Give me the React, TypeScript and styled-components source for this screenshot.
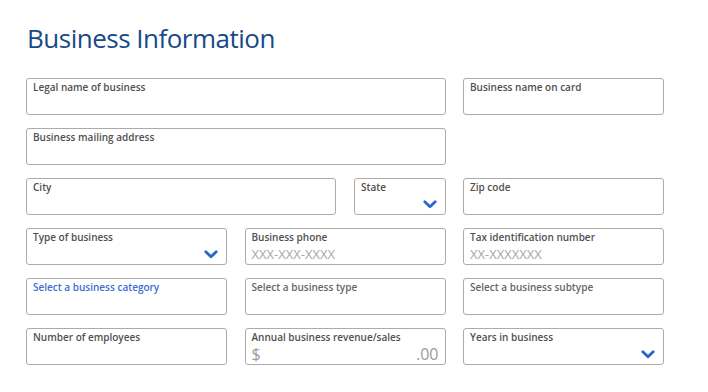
import React from "react";
import styled, { createGlobalStyle } from "styled-components";

const Global = createGlobalStyle`
  html, body { margin: 0; padding: 0; background: #fff; }
  body { font-family: "Open Sans", "Liberation Sans", sans-serif; }
`;

const Page = styled.div`
  width: 708px;
  height: 392px;
  padding: 20px 0 0 26px;
  box-sizing: border-box;
`;

const Title = styled.h1`
  margin: 0 0 22px 1px;
  font-size: 26px;
  font-weight: 400;
  line-height: 36px;
  color: #174a87;
  letter-spacing: -0.5px;
`;

const Form = styled.div`
  width: 638px;
  display: grid;
  grid-template-columns: repeat(3, 1fr);
  column-gap: 17.5px;
  row-gap: 13px;
`;

const Pair = styled.div`
  grid-column: span 2;
  display: grid;
  grid-template-columns: 310px 1fr;
  column-gap: 18px;
`;

const Field = styled.div<{ $span?: number }>`
  grid-column: span ${(p) => p.$span ?? 1};
  position: relative;
  height: 37px;
  box-sizing: border-box;
  border: 1px solid #ababab;
  border-radius: 3px;
  padding: 1px 6px 0 6px;
  display: flex;
  flex-direction: column;
  background: #fff;
`;

const Label = styled.div<{ $active?: boolean; $muted?: boolean }>`
  font-size: 10px;
  line-height: 14px;
  font-weight: 600;
  color: ${(p) => (p.$active ? "#3b6fd4" : p.$muted ? "#666" : "#505050")};
  white-space: nowrap;
`;

const Placeholder = styled.div`
  font-size: 13px;
  line-height: 16px;
  color: #a8a8a8;
  margin-top: 2px;
`;

const MoneyRow = styled.div`
  display: flex;
  justify-content: space-between;
  font-size: 16px;
  line-height: 16px;
  color: #9a9a9a;
  margin-top: 2px;
  padding-right: 0;
`;

const Chevron = styled.svg`
  position: absolute;
  right: 8px;
  bottom: 5px;
  width: 14px;
  height: 9px;
`;

const Arrow = () => (
  <Chevron viewBox="0 0 14 9">
    <path
      d="M1.8 1.8 L7 6.8 L12.2 1.8"
      fill="none"
      stroke="#2a66c9"
      strokeWidth="2.8"
      strokeLinecap="round"
      strokeLinejoin="round"
    />
  </Chevron>
);

const Empty = styled.div``;

export default function App() {
  return (
    <Page>
      <Global />
      <Title>Business Information</Title>
      <Form>
        <Field $span={2}>
          <Label>Legal name of business</Label>
        </Field>
        <Field>
          <Label>Business name on card</Label>
        </Field>

        <Field $span={2}>
          <Label>Business mailing address</Label>
        </Field>
        <Empty />

        <Pair>
          <Field>
            <Label>City</Label>
          </Field>
          <Field>
            <Label>State</Label>
            <Arrow />
          </Field>
        </Pair>
        <Field>
          <Label>Zip code</Label>
        </Field>

        <Field>
          <Label>Type of business</Label>
          <Arrow />
        </Field>
        <Field>
          <Label>Business phone</Label>
          <Placeholder>XXX-XXX-XXXX</Placeholder>
        </Field>
        <Field>
          <Label>Tax identification number</Label>
          <Placeholder>XX-XXXXXXX</Placeholder>
        </Field>

        <Field>
          <Label $active>Select a business category</Label>
        </Field>
        <Field>
          <Label $muted>Select a business type</Label>
        </Field>
        <Field>
          <Label $muted>Select a business subtype</Label>
        </Field>

        <Field>
          <Label>Number of employees</Label>
        </Field>
        <Field>
          <Label>Annual business revenue/sales</Label>
          <MoneyRow>
            <span>$</span>
            <span>.00</span>
          </MoneyRow>
        </Field>
        <Field>
          <Label>Years in business</Label>
          <Arrow />
        </Field>
      </Form>
    </Page>
  );
}
